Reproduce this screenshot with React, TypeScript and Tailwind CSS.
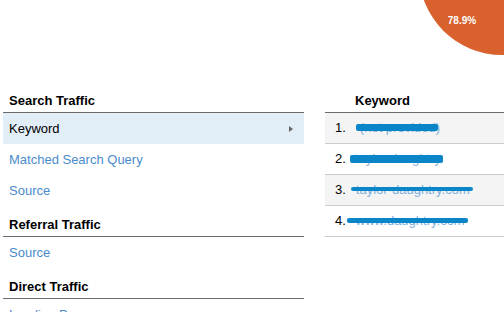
const font = { fontFamily: '"Liberation Sans", Arial, sans-serif' }

const keywords = [
  { n: '1.', text: '(not provided)', bar: 'left-[31px] w-[82px] top-[11px] h-[7px]', textPl: 'pl-[14px]' },
  { n: '2.', text: 'taylor daughtry', bar: 'left-[25px] w-[93px] top-[11px] h-[8px]', textPl: 'pl-[9px]' },
  { n: '3.', text: 'taylor-daughtry.com', bar: 'left-[26px] w-[122px] top-[12px] h-[4px]', textPl: 'pl-[10px]' },
  { n: '4.', text: 'www.daughtry.com', bar: 'left-[22px] w-[121px] top-[12px] h-[5px]', textPl: 'pl-[10px]' },
]

function SectionHeader({ title, first }: { title: string; first?: boolean }) {
  return (
    <div
      className={`${first ? '' : 'pt-[8px]'} pl-[6px] text-[13px] leading-[22px] font-bold text-black border-b border-[#6b6b6b]`}
    >
      {title}
    </div>
  )
}

function NavRow({ label, active }: { label: string; active?: boolean }) {
  return (
    <div
      className={`h-[31px] flex items-center justify-between pl-[6px] pr-[11px] text-[13px] ${
        active ? 'bg-[#e1edf7] text-black' : 'text-[#4a8bcb]'
      }`}
    >
      <span>{label}</span>
      {active && (
        <span className="w-0 h-0 border-y-[3.5px] border-y-transparent border-l-[4px] border-l-[#666]" />
      )}
    </div>
  )
}

export default function App() {
  return (
    <div className="relative w-[504px] h-[312px] overflow-hidden bg-white" style={font}>
      {/* pie slice peeking in from the top right */}
      <svg className="absolute left-0 top-0" width="504" height="312">
        <circle cx="502" cy="-28" r="83" fill="#d9612d" />
        <text
          x="462"
          y="24"
          textAnchor="middle"
          fill="#fff"
          fontSize="10"
          fontWeight="bold"
          style={font}
        >
          78.9%
        </text>
      </svg>

      <div className="flex gap-[21px] pt-[90px]">
        {/* left nav */}
        <div className="ml-[3px] w-[301px] shrink-0">
          <SectionHeader title="Search Traffic" first />
          <NavRow label="Keyword" active />
          <NavRow label="Matched Search Query" />
          <NavRow label="Source" />
          <SectionHeader title="Referral Traffic" />
          <NavRow label="Source" />
          <SectionHeader title="Direct Traffic" />
          <NavRow label="Landing Page" />
        </div>

        {/* keyword table */}
        <div className="flex-1">
          <div className="pl-[30px] text-[13px] leading-[22px] font-bold text-black border-b border-[#6b6b6b]">
            Keyword
          </div>
          {keywords.map((k, i) => (
            <div
              key={k.n}
              className={`relative h-[31px] flex items-center pl-[10px] text-[13px] border-b border-[#cccccc] ${
                i % 2 === 0 ? 'bg-[#f4f4f4]' : 'bg-white'
              }`}
            >
              <span className="text-black">{k.n}</span>
              <span className={`${k.textPl} text-[#7fb0dc]`}>{k.text}</span>
              <span className={`absolute ${k.bar} rounded-[2px] bg-[#0a86c8]`} />
            </div>
          ))}
        </div>
      </div>
    </div>
  )
}
